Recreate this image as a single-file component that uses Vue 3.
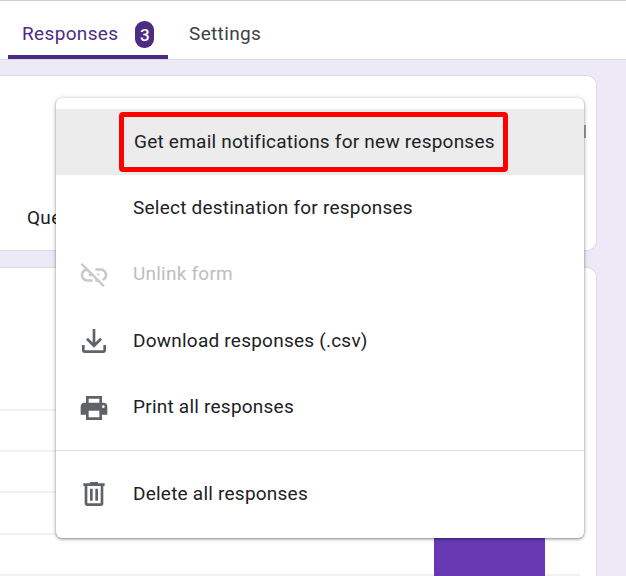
<template>
  <div class="page">
    <header class="tabs">
      <div class="tab active">
        <span>Responses</span>
        <span class="badge">3</span>
      </div>
      <div class="tab">Settings</div>
    </header>
    <main class="content">
      <section class="card summary">
        <div class="subtab">Questions</div>
      </section>
      <section class="card chart">
        <div class="rows">
          <div v-for="n in 5" :key="n" class="row"></div>
        </div>
        <div class="bar"></div>
      </section>
    </main>
    <div class="sliver"></div>
    <div class="menu">
      <div
        v-for="item in items"
        :key="item.label"
        class="item"
        :class="{ hover: item.hover, disabled: item.disabled, divided: item.divided }"
      >
        <span class="icon">
          <svg v-if="item.icon" width="32" height="32" viewBox="0 0 24 24" fill="currentColor">
            <path :d="item.icon" />
          </svg>
        </span>
        <span class="label">{{ item.label }}</span>
      </div>
    </div>
    <div class="highlight"></div>
  </div>
</template>

<script setup>
const items = [
  { label: 'Get email notifications for new responses', hover: true },
  { label: 'Select destination for responses' },
  {
    label: 'Unlink form',
    disabled: true,
    icon: 'M17 7h-4v1.9h4c1.71 0 3.1 1.39 3.1 3.1 0 1.43-.98 2.63-2.31 2.98l1.46 1.46C20.88 15.61 22 13.95 22 12c0-2.76-2.24-5-5-5zm-1 4h-2.19l2 2H16zM2 4.27l3.11 3.11C3.29 8.12 2 9.91 2 12c0 2.76 2.24 5 5 5h4v-1.9H7c-1.71 0-3.1-1.39-3.1-3.1 0-1.59 1.21-2.9 2.76-3.07L8.73 11H8v2h2.73L13 15.27V17h1.73l4.01 4L20 19.74 3.27 3 2 4.27z'
  },
  { label: 'Download responses (.csv)', icon: 'M19 15v4H5v-4H3v4a2 2 0 0 0 2 2h14a2 2 0 0 0 2-2v-4h-2Zm-1-4-1.41-1.41L13 13.17V3h-2v10.17L7.41 9.59 6 11l6 6 6-6Z' },
  { label: 'Print all responses', icon: 'M19 8H5a3 3 0 0 0-3 3v6h4v4h12v-4h4v-6a3 3 0 0 0-3-3Zm-3 11H8v-5h8v5Zm3-7a1 1 0 1 1 0-2 1 1 0 0 1 0 2ZM6 3h12v5h-2V5H8v3H6V3Z' },
  { label: 'Delete all responses', divided: true, icon: 'M15 4V3H9v1H4v2h1v13a2 2 0 0 0 2 2h10a2 2 0 0 0 2-2V6h1V4h-5Zm2 15H7V6h10v13ZM9 8h2v9H9V8Zm4 0h2v9h-2V8Z' }
]
</script>

<style scoped>
.page {
  position: relative;
  width: 626px;
  height: 576px;
  overflow: hidden;
  background: #ede9f7;
  font-family: Roboto, "Liberation Sans", sans-serif;
  color: #202124;
}
.tabs {
  box-sizing: border-box;
  height: 60px;
  display: flex;
  background: #fff;
  border-top: 1px solid #cfcfcf;
  border-bottom: 1px solid #dadce0;
  padding-left: 8px;
}
.tab {
  box-sizing: border-box;
  height: 58px;
  display: flex;
  align-items: center;
  gap: 17px;
  font-size: 19px;
  letter-spacing: 0.35px;
  color: #3c4043;
  padding-top: 6px;
}
.tab.active {
  width: 160px;
  padding: 10px 14px 0;
  color: #4d2c84;
  border-bottom: 4px solid #4d2c84;
  border-radius: 4px 4px 0 0;
}
.tab:not(.active) {
  padding-left: 21px;
}
.badge {
  width: 20px;
  height: 27px;
  margin-top: 3px;
  border-radius: 9px;
  background: #4d2c84;
  color: #fff;
  font-size: 17px;
  font-weight: 500;
  letter-spacing: 0;
  display: flex;
  align-items: center;
  justify-content: center;
}
.content {
  display: flex;
  flex-direction: column;
  gap: 16px;
  padding: 15px 29px 0 0;
}
.card {
  background: #fff;
  border: 1px solid #dadce0;
  border-left: 0;
  border-radius: 0 10px 10px 0;
}
.summary {
  box-sizing: border-box;
  height: 176px;
  display: flex;
  align-items: flex-end;
  padding: 0 0 21px 27px;
}
.subtab {
  font-size: 19px;
  letter-spacing: 0.3px;
  color: #202124;
}
.chart {
  position: relative;
  height: 320px;
  padding-top: 141px;
  box-sizing: border-box;
}
.rows {
  display: flex;
  flex-direction: column;
  margin-right: 16px;
}
.row {
  height: 41.2px;
  box-sizing: border-box;
  border-top: 2px solid #f1f1f1;
}
.bar {
  position: absolute;
  left: 434px;
  width: 111px;
  top: 240px;
  bottom: 0;
  background: #673ab3;
}
.sliver {
  position: absolute;
  left: 583px;
  top: 125px;
  width: 3px;
  height: 13px;
  background: #a0a0a0;
}
.menu {
  position: absolute;
  left: 56px;
  top: 98px;
  width: 528px;
  height: 440px;
  box-sizing: border-box;
  padding-top: 11px;
  background: #fff;
  border-radius: 6px;
  box-shadow: 0 1px 3px rgba(0, 0, 0, 0.45), 0 0 6px rgba(0, 0, 0, 0.1);
}
.item {
  height: 66.4px;
  display: flex;
  align-items: center;
  font-size: 19px;
  letter-spacing: 0.23px;
  color: #202124;
}
.label {
  position: relative;
  top: -1px;
}
.item.hover {
  background: #ececec;
}
.item.hover .label {
  left: 1px;
}
.item.disabled {
  color: #bdbdbd;
}
.item.divided {
  border-top: 1px solid #dedede;
  margin-top: 9px;
  height: 87px;
}
.icon {
  width: 77px;
  padding-left: 22px;
  box-sizing: border-box;
  display: flex;
  color: #5f6368;
}
.item.disabled .icon {
  color: #c9c9c9;
}
.highlight {
  position: absolute;
  left: 119px;
  top: 112px;
  width: 389px;
  height: 60px;
  box-sizing: border-box;
  border: 5px solid #ff0000;
  border-radius: 4px;
}
</style>
